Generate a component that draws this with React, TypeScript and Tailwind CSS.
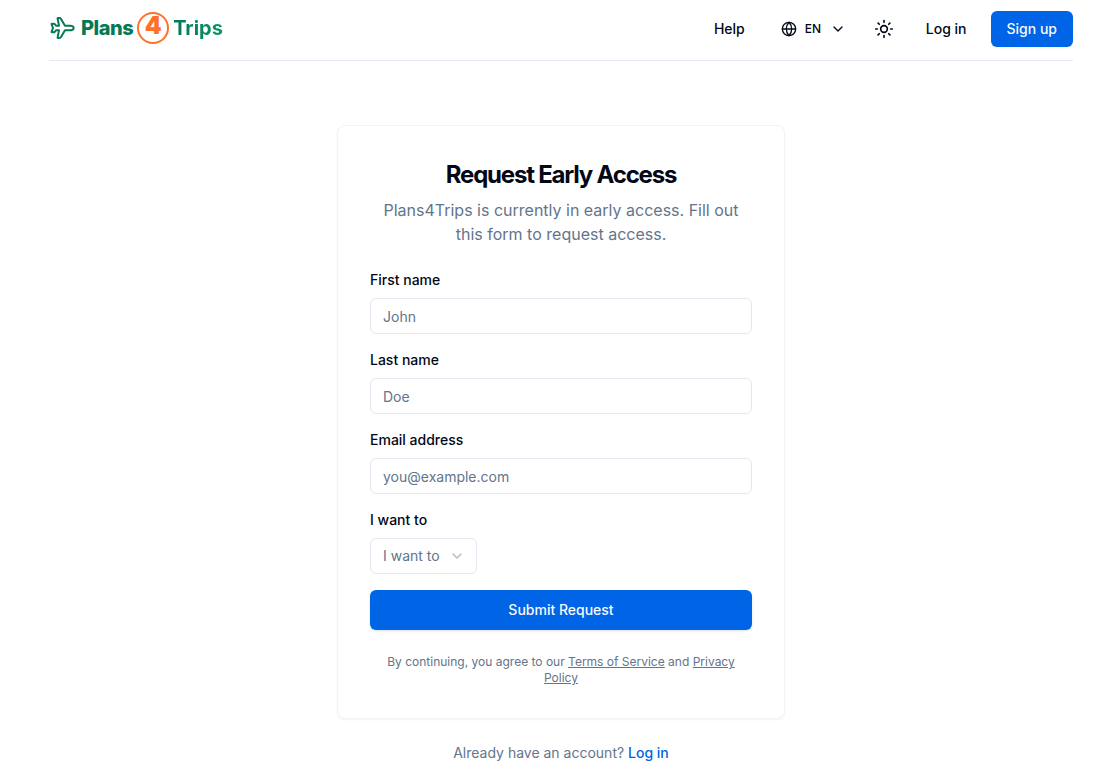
import React, { useState } from 'react';
import { ChevronDown, Globe, Sun } from 'lucide-react';

const textFields = [
    { id: 'firstName', label: 'First name', type: 'text', placeholder: 'John' },
    { id: 'lastName', label: 'Last name', type: 'text', placeholder: 'Doe' },
    { id: 'email', label: 'Email address', type: 'email', placeholder: 'you@example.com' },
];

export default function App() {
    return (
        <div className="min-h-screen bg-white pl-6 font-[Inter,sans-serif] text-sm text-[#020817]">
            <div className="mx-auto max-w-5xl">
                <Header />
                <main className="flex flex-col items-center pt-16 pb-4">
                    <RequestAccessCard />
                    <p className="mt-6 text-[#64748b]">
                        Already have an account?{' '}
                        <a href="#login" className="font-medium text-[#0064e6]">Log in</a>
                    </p>
                </main>
            </div>
        </div>
    );
}

function Header() {
    return (
        <header className="flex items-center justify-between border-b border-slate-200 pt-[11px] pb-[13px]">
            <Logo />
            <nav className="flex items-center gap-2 font-medium">
                <a href="#help" className="flex h-9 items-center px-4">Help</a>
                <div className="relative flex h-9 items-center">
                    <Globe className="pointer-events-none absolute left-3 size-4" />
                    <select
                        aria-label="Language"
                        className="h-9 appearance-none bg-transparent pr-9 pl-9 text-xs font-medium"
                    >
                        <option>EN</option>
                    </select>
                    <ChevronDown className="pointer-events-none absolute right-3 size-4" />
                </div>
                <button type="button" aria-label="Toggle theme" className="flex size-9 items-center justify-center">
                    <Sun className="size-5" />
                </button>
                <a href="#login" className="flex h-9 items-center px-4">Log in</a>
                <a href="#signup" className="flex h-9 items-center rounded-md bg-[#0064e6] px-4 text-slate-50 shadow-xs">
                    Sign up
                </a>
            </nav>
        </header>
    );
}

function Logo() {
    return (
        <a href="#home" className="flex items-center gap-1 pb-0.5 text-xl font-bold text-[#047857]">
            <PlaneIcon />
            <span className="font-extrabold tracking-tight">Plans</span>
            <span className="flex size-8 items-center justify-center rounded-full border-2 border-[#ff7029] pb-1 text-2xl font-black text-[#ff7029]">
                4
            </span>
            <span className="bg-gradient-to-r from-[#047857] to-[#059669] bg-clip-text text-transparent">Trips</span>
        </a>
    );
}

function PlaneIcon() {
    return (
        <svg
            viewBox="27 48 84 72"
            className="h-6 w-7"
            fill="none"
            stroke="currentColor"
            strokeWidth="6"
            strokeLinecap="round"
            strokeLinejoin="round"
            aria-hidden="true"
        >
            <path d="M75 77H91C96 77 101 80 101 84C101 88 96 91 91 91H75L63 111Q61 114 58 114H54Q52 114 53 111L57 91H48L44 96Q43 97 41 97H36Q34 97 35 95L39 84L35 73Q34 71 36 71H41Q43 71 44 72L48 77H57L53 57Q52 54 54 54H58Q61 54 63 57Z" />
        </svg>
    );
}

function RequestAccessCard() {
    const [intent, setIntent] = useState('');

    return (
        <section className="w-full max-w-md rounded-lg border border-slate-100 bg-white p-8 shadow-xs">
            <div className="text-center">
                <h1 className="text-2xl/[34px] font-bold tracking-tighter">Request Early Access</h1>
                <p className="mt-1.5 text-base text-[#64748b]">
                    Plans4Trips is currently in early access. Fill out this form to request access.
                </p>
            </div>

            <form className="mt-6 flex flex-col gap-4" onSubmit={(e) => e.preventDefault()}>
                {textFields.map((field) => (
                    <div key={field.id} className="flex flex-col gap-2">
                        <label htmlFor={field.id} className="font-medium">{field.label}</label>
                        <input
                            id={field.id}
                            type={field.type}
                            placeholder={field.placeholder}
                            className="h-9 w-full rounded-md border border-slate-200 px-3 placeholder:text-[#64748b]"
                        />
                    </div>
                ))}

                <div className="flex flex-col items-start gap-2">
                    <label htmlFor="intent" className="font-medium">I want to</label>
                    <div className="relative flex items-center">
                        <select
                            id="intent"
                            value={intent}
                            onChange={(e) => setIntent(e.target.value)}
                            className="h-9 appearance-none rounded-md border border-slate-200 bg-transparent pr-9 pl-3 text-[#64748b]"
                        >
                            <option value="">I want to</option>
                        </select>
                        <ChevronDown className="pointer-events-none absolute right-3 size-4 text-[#64748b] opacity-50" />
                    </div>
                </div>

                <button type="submit" className="h-10 w-full rounded-md bg-[#0064e6] font-medium text-slate-50 shadow-sm">
                    Submit Request
                </button>
            </form>

            <p className="mt-6 text-center text-xs text-[#64748b]">
                By continuing, you agree to our{' '}
                <a href="#terms" className="underline">Terms of Service</a> and{' '}
                <a href="#privacy" className="underline">Privacy Policy</a>
            </p>
        </section>
    );
}
